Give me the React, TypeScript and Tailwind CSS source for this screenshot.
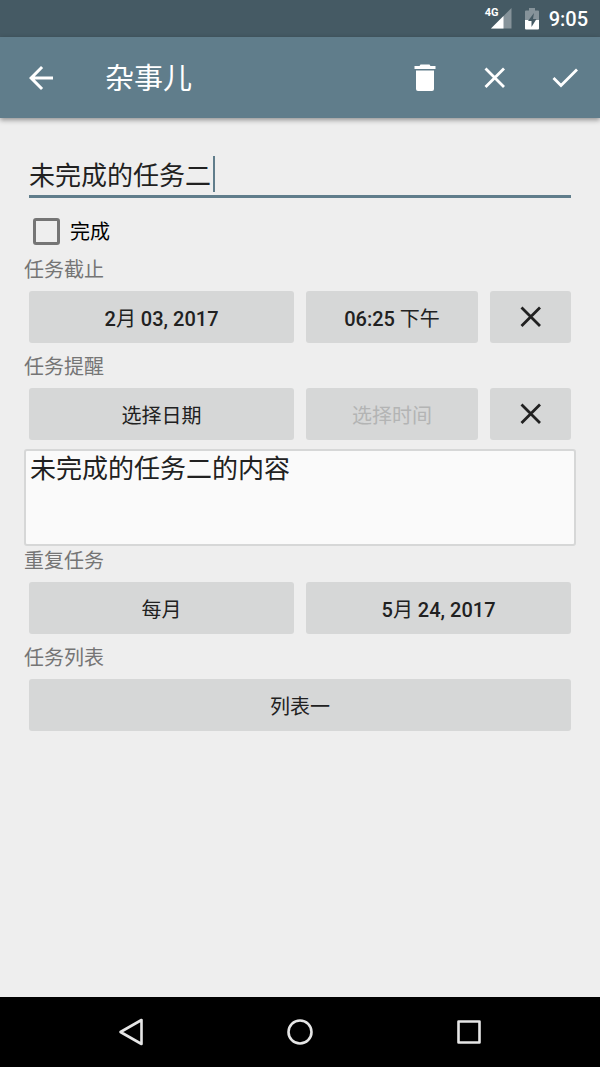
import { useState } from "react";
import type { ReactNode } from "react";

function SignalIcon() {
  return (
    <svg width="21" height="21" viewBox="0 0 21 21" aria-hidden="true">
      <path d="M20.500 0v20.500H0z" fill="#fff" fillOpacity="0.35" />
      <path d="M12.500 8v12.500H0z" fill="#fff" />
    </svg>
  );
}

function BatteryIcon() {
  return (
    <svg width="14" height="22" viewBox="0 0 14 22" aria-hidden="true">
      <path d="M4 0h6v2.500h3q1 0 1 1V12H0V3.500q0-1 1-1h3z" fill="#fff" fillOpacity="0.35" />
      <path d="M0 12h14v8.500q0 1-1 1H1q-1 0-1-1z" fill="#fff" />
      <path d="M9 5 3 13h3.500v6L11.500 11H8z" fill="#455a64" />
    </svg>
  );
}

function BackIcon() {
  return (
    <svg width="36" height="36" viewBox="0 0 24 24" fill="#fff" aria-hidden="true">
      <path d="M20 11H7.830l5.590-5.590L12 4l-8 8 8 8 1.410-1.410L7.830 13H20v-2z" />
    </svg>
  );
}

function TrashIcon() {
  return (
    <svg width="36" height="36" viewBox="0 0 36 36" fill="#fff" aria-hidden="true">
      <path d="M13.500 4.500h9l1 1.500h5v3h-21V6h5z" />
      <path d="M9 10.500h18V29q0 2-2 2H11q-2 0-2-2z" />
    </svg>
  );
}

function CloseIcon() {
  return (
    <svg width="36" height="36" viewBox="0 0 36 36" fill="none" stroke="currentColor" strokeWidth="2.8" aria-hidden="true">
      <path d="m8.500 8.500 18.500 18.500M27 8.500 8.500 27" />
    </svg>
  );
}

function CheckIcon() {
  return (
    <svg width="36" height="36" viewBox="0 0 36 36" fill="none" stroke="#fff" strokeWidth="2.8" aria-hidden="true">
      <path d="m6.500 18 7.500 7.500L30 9.500" />
    </svg>
  );
}

type FieldButtonProps = {
  children: ReactNode;
  disabled?: boolean;
  className?: string;
};

function FieldButton({ children, disabled, className = "" }: FieldButtonProps) {
  return (
    <button
      type="button"
      disabled={disabled}
      className={`h-[52px] rounded-[3px] bg-[#d6d7d7] pt-[3px] text-xl text-[#212121] disabled:text-[#b3b4b4] ${className}`}
    >
      {children}
    </button>
  );
}

function ClearButton({ label }: { label: string }) {
  return (
    <button
      type="button"
      aria-label={label}
      className="flex h-[52px] w-[81px] items-center justify-center rounded-[3px] bg-[#d6d7d7] text-[#212121]"
    >
      <CloseIcon />
    </button>
  );
}

function Section({ title, children }: { title: string; children: ReactNode }) {
  return (
    <section className="pb-[9px]">
      <h2 className="pt-px text-xl leading-7 text-[#757575]">{title}</h2>
      <div className="mt-[7px] px-[5px]">{children}</div>
    </section>
  );
}

export default function App() {
  const [title, setTitle] = useState("未完成的任务二");
  const [content, setContent] = useState("未完成的任务二的内容");
  const [done, setDone] = useState(false);

  return (
    <div className="flex min-h-screen flex-col bg-[#eeeeee] font-['Roboto','Noto_Sans_CJK_SC',sans-serif]">
      {/* Status bar */}
      <div className="flex h-[37px] items-center justify-end bg-[#455a64] pr-3 text-white">
        <span className="mb-3 -mr-2 text-[11px] leading-3 font-bold">4G</span>
        <SignalIcon />
        <span className="mr-[10px] ml-[13px]">
          <BatteryIcon />
        </span>
        <span className="text-xl font-medium">9:05</span>
      </div>

      {/* App bar */}
      <header className="flex h-[81px] items-center bg-[#607d8b] text-white shadow-[0_2px_5px_rgba(0,0,0,0.4)]">
        <button type="button" aria-label="返回" className="flex h-full w-[82px] items-center justify-center">
          <BackIcon />
        </button>
        <h1 className="flex-1 pt-[3px] pl-[23px] text-[29px] leading-10">杂事儿</h1>
        <button type="button" aria-label="删除" className="flex h-full w-[70px] items-center justify-center">
          <TrashIcon />
        </button>
        <button type="button" aria-label="取消" className="flex h-full w-[70px] items-center justify-center">
          <CloseIcon />
        </button>
        <button type="button" aria-label="保存" className="flex h-full w-[70px] items-center justify-center">
          <CheckIcon />
        </button>
      </header>

      <main className="flex-1 px-6 pt-9">
        <div className="relative mx-[5px]">
          <input
            type="text"
            aria-label="任务"
            value={title}
            onChange={(e) => setTitle(e.target.value)}
            className="block h-11 w-full border-b-3 border-[#607d8b] bg-transparent pb-0.5 text-[26px] text-[#212121] caret-transparent outline-none"
          />
          {/* text cursor */}
          <span className="absolute top-0.5 left-[184px] h-9 w-0.5 bg-[#607d8b]" />
        </div>

        <label className="flex h-[57px] items-center pt-[10px] pl-[9px] text-xl text-black">
          <input
            type="checkbox"
            checked={done}
            onChange={(e) => setDone(e.target.checked)}
            className="mr-[10px] size-[27px] appearance-none rounded-[3px] border-3 border-[#757575] checked:bg-[#607d8b]"
          />
          完成
        </label>

        <Section title="任务截止">
          <div className="grid grid-cols-2 gap-3">
            <FieldButton>
              <span className="font-medium">2</span>月<span className="font-medium"> 03, 2017</span>
            </FieldButton>
            <div className="flex gap-3">
              <FieldButton className="flex-1">
                <span className="font-medium">06:25</span> 下午
              </FieldButton>
              <ClearButton label="清除截止" />
            </div>
          </div>
        </Section>

        <Section title="任务提醒">
          <div className="grid grid-cols-2 gap-3">
            <FieldButton>选择日期</FieldButton>
            <div className="flex gap-3">
              <FieldButton disabled className="flex-1">
                选择时间
              </FieldButton>
              <ClearButton label="清除提醒" />
            </div>
          </div>
        </Section>

        <textarea
          aria-label="内容"
          value={content}
          onChange={(e) => setContent(e.target.value)}
          className="block h-[97px] w-full resize-none rounded-[3px] border-2 border-[#d6d7d7] bg-[#fafafa] px-1 text-[26px] leading-9 text-[#212121] outline-none"
        />

        <Section title="重复任务">
          <div className="grid grid-cols-2 gap-3">
            <FieldButton>每月</FieldButton>
            <FieldButton>
              <span className="font-medium">5</span>月<span className="font-medium"> 24, 2017</span>
            </FieldButton>
          </div>
        </Section>

        <Section title="任务列表">
          <FieldButton className="w-full">列表一</FieldButton>
        </Section>
      </main>

      {/* System navigation */}
      <nav className="grid h-[70px] grid-cols-3 bg-black px-[47px]">
        <button type="button" aria-label="后退" className="flex items-center justify-center">
          <svg width="30" height="30" viewBox="0 0 30 30" fill="none" stroke="#e6e6e6" strokeWidth="2.6" strokeLinejoin="round">
            <path d="M25.500 3v24L4.500 15z" />
          </svg>
        </button>
        <button type="button" aria-label="主屏幕" className="flex items-center justify-center">
          <svg width="30" height="30" viewBox="0 0 30 30" fill="none" stroke="#e6e6e6" strokeWidth="2.6">
            <circle cx="15" cy="15" r="11.500" />
          </svg>
        </button>
        <button type="button" aria-label="最近任务" className="flex items-center justify-center">
          <svg width="30" height="30" viewBox="0 0 30 30" fill="none" stroke="#e6e6e6" strokeWidth="2.6" strokeLinejoin="round">
            <path d="M4.500 4.500h21v21h-21z" />
          </svg>
        </button>
      </nav>
    </div>
  );
}
